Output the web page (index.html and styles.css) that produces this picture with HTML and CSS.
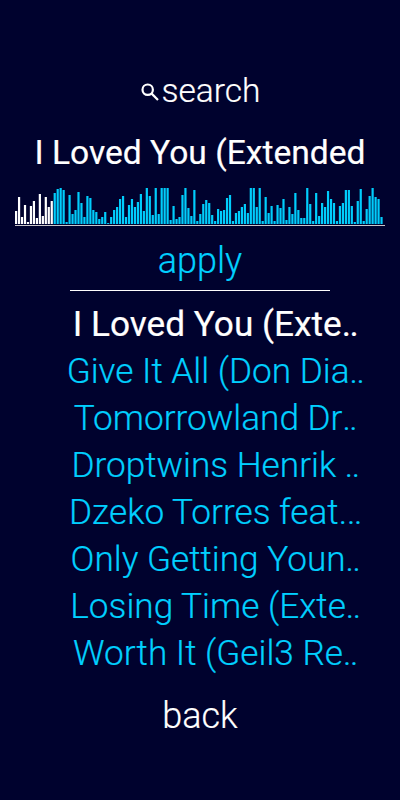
FILE: index.html
```
<!DOCTYPE html>
<html>
<head>
  <meta charset="utf-8">
  <title>Music</title>
  <link rel="stylesheet" href="styles.css">
</head>
<body>
  <div class="screen">
    <div class="search">
      <svg class="search-icon" viewBox="0 0 18 18">
        <circle cx="6.7" cy="6.7" r="5.2" />
        <path d="M10.4 10.4L17 17" />
      </svg>
      <span>search</span>
    </div>

    <div class="title">I Loved You (Extended</div>
    <svg class="wave" id="wave"></svg>

    <div class="apply">apply</div>

    <div class="songs">
      <div class="song active">I Loved You (Exte<span class="dots">..</span></div>
      <div class="song">Give It All (Don Dia<span class="dots">..</span></div>
      <div class="song">Tomorrowland Dr<span class="dots">..</span></div>
      <div class="song">Droptwins Henrik <span class="dots">..</span></div>
      <div class="song">Dzeko Torres feat.<span class="dots">..</span></div>
      <div class="song">Only Getting Youn<span class="dots">..</span></div>
      <div class="song">Losing Time (Exte<span class="dots">..</span></div>
      <div class="song">Worth It (Geil3 Re<span class="dots">..</span></div>
    </div>

    <div class="back">back</div>
  </div>

  <script src="wave.js"></script>
</body>
</html>
```
FILE: styles.css
```
body {
  margin: 0;
  background: #00022e;
  color: #fff;
  font-family: Roboto, sans-serif;
  font-weight: 300;
  -webkit-text-stroke: 0.2px;
}

.screen {
  height: 800px;
  box-sizing: border-box;
  padding-top: 69px;
  overflow: hidden;
  display: flex;
  flex-direction: column;
  align-items: center;
  white-space: nowrap;
}

.search {
  display: flex;
  align-items: center;
  height: 42px;
  margin-left: 2px;
  font-size: 33.6px;
  line-height: 43px;
}

.search-icon {
  width: 18px;
  height: 18px;
  margin: 4px 2px 0 0;
  fill: none;
  stroke: #fff;
  stroke-width: 2.2;
}

.title {
  margin-top: 22px;
  height: 40px;
  line-height: 40px;
  font-size: 33.6px;
  font-weight: 400;
}

.wave {
  width: 370px;
  height: 38px;
  margin-top: 14px;
  border-bottom: 1px solid #c9c5c8;
  fill: #00cdfc;
}

.wave .played {
  fill: #fff;
}

.apply {
  width: 260px;
  height: 64px;
  line-height: 71px;
  border-bottom: 1px solid #fff;
  text-align: center;
  font-size: 36px;
  color: #00d0ff;
}

.songs {
  margin: 10px 0 0 30px;
  text-align: center;
  font-size: 35.2px;
  line-height: 47px;
  color: #00d0ff;
}

.song {
  height: 47px;
}

.dots {
  letter-spacing: -1.5px;
}

.active {
  color: #fff;
  font-weight: 400;
}

.back {
  margin-top: 16px;
  font-size: 36px;
  line-height: 47px;
}
```
FILE: wave.js
```
var levels = [
  13, 27, 7, 19, 2, 18, 23, 6, 30, 8, 27, 17, 23, 31, 35, 36, 34, 2, 29, 10, 14, 32, 21, 7, 28, 26, 14, 12, 5, 7, 12, 1,
  7, 14, 17, 25, 28, 7, 19, 25, 17, 22, 30, 13, 36, 28, 9, 36, 10, 36, 36, 36, 4, 18, 5, 7, 29, 36, 16, 8, 34, 3, 10, 20,
  24, 21, 9, 3, 15, 13, 14, 26, 29, 3, 11, 13, 17, 20, 11, 36, 36, 17, 36, 3, 27, 11, 18, 3, 19, 16, 25, 4, 17, 10, 31, 14,
  6, 6, 36, 20, 3, 31, 8, 21, 17, 33, 25, 21, 3, 18, 21, 34, 34, 18, 2, 23, 35, 3, 15, 28, 36, 27, 25, 7
];
var played = 13;
var step = 2.971;
var wave = document.getElementById("wave");

levels.forEach(function (level, i) {
  var bar = document.createElementNS("http://www.w3.org/2000/svg", "rect");
  bar.setAttribute("x", i * step);
  bar.setAttribute("y", 37 - level);
  bar.setAttribute("width", 2.2);
  bar.setAttribute("height", level);
  if (i < played) {
    bar.setAttribute("class", "played");
  }
  wave.appendChild(bar);
});
```
